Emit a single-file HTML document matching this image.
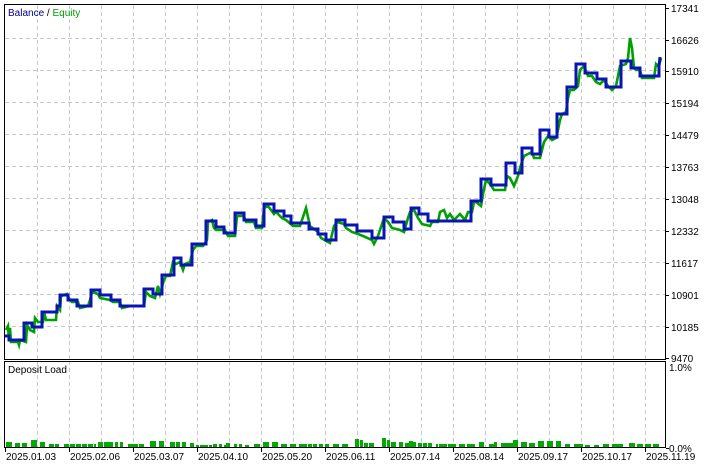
<!DOCTYPE html>
<html><head><meta charset="utf-8"><style>
html,body{margin:0;padding:0;background:#fff;}
svg{display:block;font-family:"Liberation Sans",sans-serif;font-size:10px;}
</style></head><body>
<svg width="710" height="465" viewBox="0 0 710 465" xmlns="http://www.w3.org/2000/svg">
<rect width="710" height="465" fill="#fff"/>
<g stroke="#c8c8c8" stroke-width="1" stroke-dasharray="4,3" fill="none">
<path d="M37.5 5V359M69.5 5V359M101.5 5V359M133.5 5V359M165.5 5V359M197.5 5V359M229.5 5V359M261.5 5V359M293.5 5V359M325.5 5V359M357.5 5V359M389.5 5V359M421.5 5V359M453.5 5V359M485.5 5V359M517.5 5V359M549.5 5V359M581.5 5V359M613.5 5V359M645.5 5V359"/>
<path d="M37.5 361V447M69.5 361V447M101.5 361V447M133.5 361V447M165.5 361V447M197.5 361V447M229.5 361V447M261.5 361V447M293.5 361V447M325.5 361V447M357.5 361V447M389.5 361V447M421.5 361V447M453.5 361V447M485.5 361V447M517.5 361V447M549.5 361V447M581.5 361V447M613.5 361V447M645.5 361V447"/>
<path d="M5 38.5H665M5 70.5H665M5 102.5H665M5 134.5H665M5 166.5H665M5 198.5H665M5 230.5H665M5 262.5H665M5 294.5H665M5 326.5H665"/>
</g>
<!-- equity -->
<polyline fill="none" stroke="#00a000" stroke-width="2.6" points="6,330 8,326 9,340 10,328 11,342 18,342 19,345 20,340 26,342 27,325 30,330 34,332 35,318 38,322 43,322 44,312 46,320 56,320 57,306 60,310 61,296 67,294 70,300 72,302 78,302 80,308 88,306 90,300 92,292 98,294 100,298 110,300 113,302 120,302 122,308 130,306 144,306 146,292 150,296 155,298 158,286 160,294 164,280 166,276 170,276 173,262 176,264 180,262 183,270 185,264 190,262 193,250 196,246 203,246 207,240 208,222 212,220 214,228 216,230 225,230 228,236 235,236 237,216 244,216 246,222 254,222 256,228 262,228 264,208 268,206 274,214 276,212 282,218 286,220 293,226 300,226 304,214 306,208 310,226 318,232 321,238 328,242 330,243 334,226 337,222 344,224 346,228 352,232 358,234 363,236 372,240 374,244 378,236 384,218 388,222 392,228 400,230 404,232 408,218 410,212 414,210 418,218 422,224 430,226 432,222 438,222 440,212 444,210 447,218 450,214 454,220 460,214 465,220 468,212 472,212 474,202 476,202 481,206 483,194 486,180 490,184 494,190 505,190 507,176 510,178 512,182 514,186 518,176 520,168 524,156 528,154 532,152 534,158 540,158 542,150 544,142 548,136 552,140 556,138 558,130 560,120 562,114 566,112 568,98 570,90 574,90 578,86 580,70 584,66 588,76 592,76 596,82 600,84 604,80 608,86 612,90 616,86 620,66 626,64 628,58 630,38 632,48 634,68 636,70 640,70 642,78 654,78 656,64 658,66 660,62 661,58"/>
<!-- balance -->
<polyline fill="none" stroke="#0a14b4" stroke-width="3" points="5,336 9,336 9,340 24,340 24,323 32,323 32,327 42,327 42,312 57,312 57,306 60,306 60,295 68,295 68,300 77,300 77,306 91,306 91,290 100,290 100,295 111,295 111,300 120,300 120,306 144,306 144,289 153,289 153,294 162,294 162,275 174,275 174,258 181,258 181,265 192,265 192,244 206,244 206,221 216,221 216,227 224,227 224,233 235,233 235,213 244,213 244,220 256,220 256,226 264,226 264,204 274,204 274,211 284,211 284,216 291,216 291,223 309,223 309,229 318,229 318,234 326,234 326,240 336,240 336,220 345,220 345,225 357,225 357,231 372,231 372,238 384,238 384,217 393,217 393,222 404,222 404,229 411,229 411,208 419,208 419,214 428,214 428,221 471,221 471,201 481,201 481,179 491,179 491,185 506,185 506,163 515,163 515,173 522,173 522,148 532,148 532,154 540,154 540,130 549,130 549,137 557,137 557,114 567,114 567,87 576,87 576,64 585,64 585,73 597,73 597,79 606,79 606,87 621,87 621,61 631,61 631,68 640,68 640,76 659,76 659,66 660,57"/>
<!-- deposit load bars -->
<g fill="#00aa00">
<rect x="6" y="442" width="6" height="5"/><rect x="15" y="443" width="5" height="4"/><rect x="22" y="443" width="5" height="4"/><rect x="31" y="440" width="6" height="7"/><rect x="40" y="442" width="5" height="5"/>
<rect x="49" y="444" width="5" height="3"/><rect x="55" y="444" width="4" height="3"/><rect x="64" y="444" width="5" height="3"/><rect x="70" y="444" width="5" height="3"/><rect x="76" y="444" width="5" height="3"/><rect x="82" y="444" width="5" height="3"/><rect x="88" y="444" width="5" height="3"/><rect x="94" y="444" width="2" height="3"/>
<rect x="98" y="442" width="5" height="5"/><rect x="104" y="442" width="4" height="5"/><rect x="108" y="442" width="5" height="5"/><rect x="115" y="442" width="3" height="5"/><rect x="120" y="442" width="3" height="5"/>
<rect x="128" y="444" width="5" height="3"/><rect x="133" y="444" width="5" height="3"/><rect x="139" y="444" width="5" height="3"/><rect x="150" y="441" width="6" height="6"/><rect x="159" y="441" width="5" height="6"/><rect x="170" y="442" width="5" height="5"/><rect x="176" y="442" width="4" height="5"/><rect x="182" y="442" width="4" height="5"/><rect x="190" y="443" width="4" height="4"/><rect x="196" y="445" width="3" height="2"/>
<rect x="200" y="445" width="8" height="2"/><rect x="209" y="445" width="3" height="2"/><rect x="213" y="444" width="4" height="3"/><rect x="219" y="444" width="3" height="3"/><rect x="224" y="445" width="3" height="2"/><rect x="226" y="443" width="4" height="4"/><rect x="234" y="444" width="3" height="3"/><rect x="239" y="444" width="3" height="3"/><rect x="245" y="445" width="4" height="2"/><rect x="254" y="444" width="6" height="3"/><rect x="263" y="442" width="6" height="5"/><rect x="272" y="442" width="6" height="5"/><rect x="281" y="444" width="6" height="3"/><rect x="290" y="444" width="6" height="3"/><rect x="299" y="444" width="8" height="3"/><rect x="308" y="444" width="4" height="3"/><rect x="313" y="444" width="4" height="3"/><rect x="319" y="444" width="4" height="3"/><rect x="325" y="444" width="4" height="3"/><rect x="333" y="444" width="6" height="3"/><rect x="342" y="444" width="6" height="3"/>
<rect x="355" y="439" width="4" height="8"/><rect x="360" y="440" width="3" height="7"/><rect x="364" y="443" width="4" height="4"/><rect x="369" y="443" width="5" height="4"/><rect x="382" y="438" width="4" height="9"/><rect x="387" y="440" width="3" height="7"/><rect x="391" y="442" width="5" height="5"/><rect x="399" y="442" width="4" height="5"/><rect x="405" y="443" width="4" height="4"/><rect x="409" y="441" width="4" height="6"/><rect x="413" y="442" width="3" height="5"/><rect x="418" y="443" width="4" height="4"/><rect x="423" y="443" width="4" height="4"/><rect x="428" y="443" width="4" height="4"/><rect x="436" y="444" width="2" height="3"/><rect x="439" y="444" width="8" height="3"/><rect x="448" y="444" width="8" height="3"/><rect x="459" y="444" width="6" height="3"/><rect x="467" y="444" width="8" height="3"/><rect x="479" y="442" width="5" height="5"/><rect x="489" y="444" width="5" height="3"/><rect x="494" y="442" width="3" height="5"/><rect x="501" y="443" width="6" height="4"/><rect x="507" y="443" width="6" height="4"/><rect x="513" y="440" width="5" height="7"/><rect x="521" y="442" width="6" height="5"/><rect x="529" y="443" width="6" height="4"/><rect x="538" y="441" width="6" height="6"/><rect x="547" y="441" width="6" height="6"/><rect x="556" y="441" width="5" height="6"/>
<rect x="565" y="444" width="5" height="3"/><rect x="574" y="444" width="5" height="3"/><rect x="579" y="444" width="4" height="3"/><rect x="585" y="445" width="5" height="2"/><rect x="594" y="445" width="5" height="2"/><rect x="603" y="444" width="6" height="3"/><rect x="612" y="444" width="6" height="3"/><rect x="618" y="444" width="5" height="3"/><rect x="629" y="443" width="6" height="4"/><rect x="637" y="444" width="6" height="3"/><rect x="645" y="444" width="6" height="3"/><rect x="653" y="444" width="6" height="3"/>
</g>
<!-- frames -->
<rect x="4.5" y="4.5" width="661" height="355" fill="none" stroke="#000" stroke-width="1"/>
<rect x="4.5" y="361.5" width="661" height="86" fill="none" stroke="#000" stroke-width="1"/>
<g stroke="#000"><path d="M666 8.5h3M666 40.5h3M666 71.5h3M666 103.5h3M666 135.5h3M666 167.5h3M666 199.5h3M666 231.5h3M666 263.5h3M666 295.5h3M666 327.5h3M666 358.5h3M666 448.5h3"/>
<path d="M5.5 448v4M69.5 448v4M133.5 448v4M197.5 448v4M261.5 448v4M325.5 448v4M389.5 448v4M453.5 448v4M517.5 448v4M581.5 448v4M645.5 448v4"/></g>
<g fill="#000">
<text x="671" y="12">17341</text><text x="671" y="44">16626</text><text x="671" y="75">15910</text><text x="671" y="107">15194</text><text x="671" y="139">14479</text><text x="671" y="171">13763</text><text x="671" y="203">13048</text><text x="671" y="235">12332</text><text x="671" y="267">11617</text><text x="671" y="299">10901</text><text x="671" y="331">10185</text><text x="671" y="362">9470</text>
<text x="669" y="371">1.0%</text><text x="669" y="452">0.0%</text>
<text x="6" y="460">2025.01.03</text><text x="70" y="460">2025.02.06</text><text x="134" y="460">2025.03.07</text><text x="198" y="460">2025.04.10</text><text x="262" y="460">2025.05.20</text><text x="326" y="460">2025.06.11</text><text x="390" y="460">2025.07.14</text><text x="454" y="460">2025.08.14</text><text x="518" y="460">2025.09.17</text><text x="582" y="460">2025.10.17</text><text x="646" y="460">2025.11.19</text>
<text x="8" y="16"><tspan fill="#00008b">Balance</tspan> / <tspan fill="#00a000">Equity</tspan></text>
<text x="8" y="373">Deposit Load</text>
</g>
</svg>
</body></html>
